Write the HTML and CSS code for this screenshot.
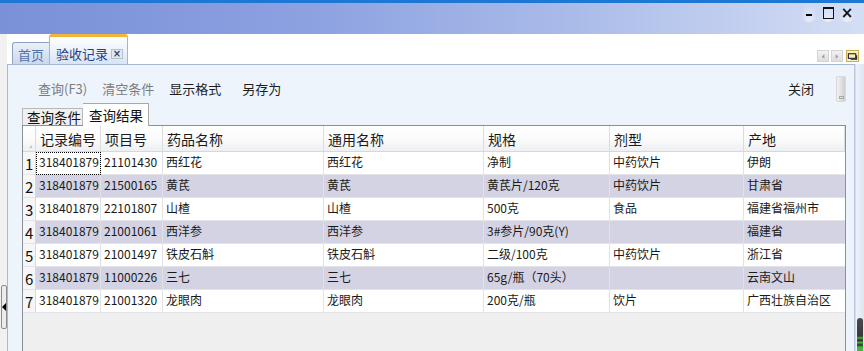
FILE: index.html
```html
<!DOCTYPE html>
<html lang="zh-CN">
<head>
<meta charset="utf-8">
<title>验收记录</title>
<link rel="stylesheet" href="styles.css">
</head>
<body>
<div class="app">
  <div class="topline"></div>
  <div class="titlebar">
    <div class="winbtns">
      <span class="wb wb-min"><i class="minbar"></i></span>
      <span class="wb wb-max"><i class="maxbox"></i></span>
      <span class="wb wb-close">×</span>
    </div>
  </div>
  <div class="body">
    <div class="gutter">
      <div class="splitter"><i class="tri"></i></div>
    </div>
    <div class="work">
      <div class="tabstrip">
        <div class="tab tab-home">首页</div>
        <div class="tab tab-active"><span class="tabtext">验收记录</span><span class="tabclose">×</span></div>
        <div class="tabnav">
          <span class="nb"><svg width="11" height="11" viewBox="0 0 11 11"><path d="M7 3 L4 5.5 L7 8 Z" fill="#a0a0a0"/></svg></span>
          <span class="nb"><svg width="11" height="11" viewBox="0 0 11 11"><path d="M4 3 L7 5.5 L4 8 Z" fill="#a0a0a0"/></svg></span>
          <span class="nb nb-list"><svg width="12" height="11" viewBox="0 0 12 11"><rect x="1.5" y="2.5" width="8" height="5" fill="none" stroke="#223" stroke-width="1.2"/><path d="M10.5 4 V8.5 H4" fill="none" stroke="#223" stroke-width="1.2"/></svg></span>
        </div>
      </div>
      <div class="lower">
        <div class="panel">
          <div class="toolbar">
            <span class="tb tb-dis tb-query">查询(F3)</span>
            <span class="tb tb-dis">清空条件</span>
            <span class="tb">显示格式</span>
            <span class="tb tb-saveas">另存为</span>
            <span class="tb tb-close">关闭</span>
            <span class="tbscroll"><i></i></span>
          </div>
          <div class="subtabs">
            <span class="stab">查询条件</span>
            <span class="stab stab-on">查询结果</span>
          </div>
          <div class="grid">
            <div class="row head">
              <div class="c rn"><i class="corner"></i></div>
              <div class="c">记录编号</div>
              <div class="c">项目号</div>
              <div class="c">药品名称</div>
              <div class="c">通用名称</div>
              <div class="c">规格</div>
              <div class="c">剂型</div>
              <div class="c">产地</div>
            </div>
            <div class="row">
              <div class="c rn">1</div>
              <div class="c focus">318401879</div>
              <div class="c">21101430</div>
              <div class="c">西红花</div>
              <div class="c">西红花</div>
              <div class="c">净制</div>
              <div class="c">中药饮片</div>
              <div class="c">伊朗</div>
            </div>
            <div class="row alt">
              <div class="c rn">2</div>
              <div class="c">318401879</div>
              <div class="c">21500165</div>
              <div class="c">黄芪</div>
              <div class="c">黄芪</div>
              <div class="c">黄芪片/120克</div>
              <div class="c">中药饮片</div>
              <div class="c">甘肃省</div>
            </div>
            <div class="row">
              <div class="c rn">3</div>
              <div class="c">318401879</div>
              <div class="c">22101807</div>
              <div class="c">山楂</div>
              <div class="c">山楂</div>
              <div class="c">500克</div>
              <div class="c">食品</div>
              <div class="c">福建省福州市</div>
            </div>
            <div class="row alt">
              <div class="c rn">4</div>
              <div class="c">318401879</div>
              <div class="c">21001061</div>
              <div class="c">西洋参</div>
              <div class="c">西洋参</div>
              <div class="c">3#参片/90克(Y)</div>
              <div class="c"></div>
              <div class="c">福建省</div>
            </div>
            <div class="row">
              <div class="c rn">5</div>
              <div class="c">318401879</div>
              <div class="c">21001497</div>
              <div class="c">铁皮石斛</div>
              <div class="c">铁皮石斛</div>
              <div class="c">二级/100克</div>
              <div class="c">中药饮片</div>
              <div class="c">浙江省</div>
            </div>
            <div class="row alt">
              <div class="c rn">6</div>
              <div class="c">318401879</div>
              <div class="c">11000226</div>
              <div class="c">三七</div>
              <div class="c">三七</div>
              <div class="c">65g/瓶（70头）</div>
              <div class="c"></div>
              <div class="c">云南文山</div>
            </div>
            <div class="row">
              <div class="c rn">7</div>
              <div class="c">318401879</div>
              <div class="c">21001320</div>
              <div class="c">龙眼肉</div>
              <div class="c">龙眼肉</div>
              <div class="c">200克/瓶</div>
              <div class="c">饮片</div>
              <div class="c">广西壮族自治区</div>
            </div>
          </div>
        </div>
        <div class="rstrip"><div class="thumb"></div></div>
      </div>
    </div>
  </div>
</div>
</body>
</html>
```

FILE: styles.css
```css
* { box-sizing: border-box; }
html, body { margin: 0; padding: 0; }
body {
  width: 864px;
  height: 351px;
  overflow: hidden;
  font-family: "Noto Sans CJK SC", "Noto Sans", sans-serif;
  color: #1a1a1a;
  background: #f2f2f2;
}
.app { width: 864px; height: 351px; display: flex; flex-direction: column; }
.topline { height: 3px; background: #1c78d4; flex: none; }
.titlebar {
  height: 31px;
  flex: none;
  background: linear-gradient(to right, #7a90d8 0%, #8ba1e0 35%, #a9bae9 65%, #d4def4 100%);
  display: flex;
  justify-content: flex-end;
  align-items: flex-start;
  padding-right: 8px;
}
.winbtns { display: flex; align-items: center; height: 20px; }
.wb {
  width: 18px;
  height: 18px;
  display: flex;
  align-items: center;
  justify-content: center;
  font-family: "DejaVu Sans", sans-serif;
  color: #111;
  border-radius: 0 0 9px 9px;
  background: radial-gradient(ellipse at 50% 100%, rgba(255,255,255,0.55) 0%, rgba(255,255,255,0) 70%);
}
.minbar { display: block; flex: none; width: 6px; height: 2px; background: #000; margin-top: 3px; }
.wb-min { margin-right: 1px; }
.wb-max { margin-right: 1px; }
.maxbox { display: block; width: 11px; height: 12px; border: 1.5px solid #111; border-top-width: 2px; }
.wb-close { font-size: 15px; font-weight: bold; }

.body { flex: 1; display: flex; min-height: 0; }
.gutter {
  width: 7px;
  flex: none;
  background: #f1f1f1;
  display: flex;
  flex-direction: column;
}
.splitter {
  margin-top: 251px;
  margin-left: 1px;
  width: 6px;
  height: 44px;
  border: 1px solid #8c8c8c;
  border-radius: 2px;
  background: #ececec;
  display: flex;
  align-items: center;
  justify-content: center;
}
.tri {
  display: block;
  width: 0; height: 0;
  border-top: 4px solid transparent;
  border-bottom: 4px solid transparent;
  border-right: 4px solid #000;
}
.work { flex: 1; display: flex; flex-direction: column; min-width: 0; }

.tabstrip {
  height: 30px;
  flex: none;
  background: #fff;
  display: flex;
  align-items: flex-end;
  padding-left: 5px;
  padding-right: 5px;
}
.tab {
  font-size: 13px;
  line-height: 18px;
  display: flex;
  align-items: center;
  white-space: nowrap;
}
.tab-home {
  width: 37px;
  height: 22px;
  justify-content: center;
  padding-top: 2px;
  color: #5272aa;
  border: 1px solid #90a4c2;
  border-bottom: none;
  border-right: none;
  border-radius: 3px 0 0 0;
  background: linear-gradient(to bottom, #eaf0f8, #cad8ec);
}
.tab-active {
  width: 79px;
  height: 30px;
  padding: 7px 0 0 6px;
  color: #26418a;
  border: 1px solid #a4b6cc;
  border-top: 3px solid #f2b43a;
  border-bottom: none;
  border-radius: 3px 3px 0 0;
  background: linear-gradient(to bottom, #ffffff, #e8f0fa 60%, #d6e4f6);
}
.tabclose {
  margin-left: 3px;
  width: 12px;
  height: 10px;
  display: flex;
  align-items: center;
  justify-content: center;
  font-family: "DejaVu Sans", sans-serif;
  font-size: 10px;
  font-weight: bold;
  line-height: 10px;
  color: #34446a;
  background: #e2e8f0;
  border: 1px solid #b4c0d0;
}
.tabnav { margin-left: auto; display: flex; gap: 2px; margin-bottom: 2px; }
.nb {
  width: 12px;
  height: 12px;
  display: flex;
  align-items: center;
  justify-content: center;
  background: linear-gradient(to bottom, #f2f2f2, #dedede);
  border: 1px solid #d4d4d4;
}
.nb-list {
  width: 13px;
  background: #f7efbe;
  border-color: #c9ad52;
  margin-left: 1px;
}

.lower { flex: 1; display: flex; min-height: 0; }
.panel {
  width: 848px;
  flex: none;
  background: #edf4fc;
  border-top: 1px solid #a6b8cf;
  border-left: 1px solid #a9b9cf;
  border-right: 1px solid #b8c8dc;
  padding-left: 14px;
  padding-right: 8px;
  display: flex;
  flex-direction: column;
  min-height: 0;
}
.toolbar {
  height: 38px;
  flex: none;
  padding-top: 10px;
  display: flex;
  align-items: center;
  gap: 15px;
  font-size: 13px;
  line-height: 18px;
}
.tb { color: #1e1e1e; white-space: nowrap; }
.tb-dis { color: #7c7c7c; }
.tb-query { margin-left: 16px; }
.tb-saveas { margin-left: 6px; }
.tb-close { margin-left: auto; }
.tbscroll {
  margin-left: 7px;
  width: 10px;
  height: 26px;
  border-radius: 2px;
  background: linear-gradient(to right, #f2f2f2, #d0d0d0);
  border: 1px solid #d8d8d8;
  display: flex;
  align-items: flex-end;
  justify-content: center;
  padding-bottom: 2px;
}
.tbscroll i { display: block; width: 5px; height: 3px; border: 1px solid #aaa; }

.subtabs {
  height: 22px;
  flex: none;
  display: flex;
  align-items: flex-end;
  font-size: 13.5px;
  white-space: nowrap;
}
.stab {
  height: 17px;
  width: 61px;
  padding-left: 4px;
  background: #f0f0f0;
  border: 1px solid #b8b8b8;
  border-bottom: none;
  color: #111;
  line-height: 16px;
  overflow: visible;
}
.stab-on {
  height: 23px;
  width: 66px;
  margin-bottom: -1px;
  padding-left: 6px;
  padding-top: 2px;
  background: #fff;
  border-color: #a8a8a8;
  border-left: none;
  position: relative;
  z-index: 1;
  line-height: 18px;
}

.grid {
  flex: 1;
  min-height: 0;
  width: 824px;
  border: 1px solid #8a8f98;
  border-bottom: none;
  background: #efefef;
  overflow: hidden;
}
.row {
  display: grid;
  grid-template-columns: 13px 65px 62px 161px 160px 126px 134px 101px;
  height: 23px;
  background: #fff;
  font-size: 12px;
}
.row.alt { background: #d4d3e3; }
.c {
  border-right: 1px solid #e2e2e6;
  border-bottom: 1px solid #e4e4e8;
  padding-left: 3px;
  line-height: 20px;
  white-space: nowrap;
  overflow: hidden;
  color: #1a1a1a;
}
.c:last-child { border-right: none; }
.row .rn {
  background: #f6f6f6;
  padding-left: 2px;
  font-size: 15px;
  line-height: 24px;
  border-right: 1px solid #d8d8d8;
  color: #111;
}
.row.head {
  height: 26px;
  font-size: 14px;
  background: linear-gradient(to bottom, #ffffff 0%, #fbfbfb 50%, #eceef1 100%);
}
.row.head .c {
  line-height: 26px;
  padding-left: 4px;
  border-right: 1px solid #dcdcdc;
  border-bottom: 1px solid #d8d8d8;
}
.row.head .rn {
  background: transparent;
  display: flex;
  align-items: flex-end;
  padding: 0 0 3px 6px;
}
.corner {
  display: block;
  width: 0; height: 0;
  border-left: 3px solid transparent;
  border-bottom: 3px solid #c4c4c4;
}
.c.focus { outline: 1px dotted #000; outline-offset: -1px; }

.rstrip {
  flex: 1;
  background: linear-gradient(to right, #eef3f9, #dde6f1);
  border-left: 1px solid #d4dee9;
  display: flex;
  flex-direction: column;
  justify-content: flex-end;
  align-items: center;
}
.thumb {
  width: 6px;
  height: 33px;
  border-radius: 3px 3px 0 0;
  background: linear-gradient(to bottom, #4a4a4a 0%, #3a3a3a 55%, #3fae3f 60%, #2f2f2f 68%, #43b443 74%, #2f2f2f 82%, #43b443 88%);
}
```
